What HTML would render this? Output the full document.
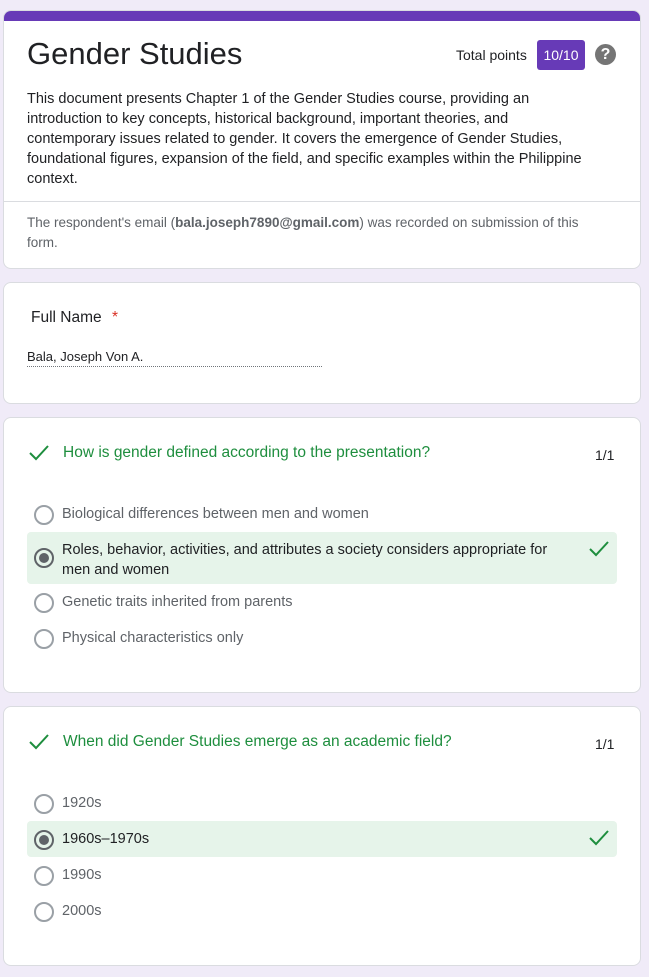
<!DOCTYPE html>
<html><head><meta charset="utf-8"><style>
body{margin:0;width:649px;height:977px;background:#f0ebf8;font-family:"Liberation Sans",sans-serif;position:relative;overflow:hidden;color:#202124}
.card{position:absolute;left:3px;width:638px;background:#fff;border:1px solid #dadce0;border-radius:8px;box-sizing:border-box}
.a{position:absolute;white-space:nowrap}
.r{position:absolute;width:16px;height:16px;border:2px solid #9aa0a6;border-radius:50%;left:34px}
.r.s{border-color:#5f6368}
.r.s:after{content:"";position:absolute;left:3px;top:3px;width:10px;height:10px;border-radius:50%;background:#5f6368}
.opt{font-size:14.5px;color:#5f6368;left:62px}
.hl{position:absolute;left:27px;width:590px;background:#e6f4ea;border-radius:4px}
.q{font-size:15.5px;color:#1e8e3e;left:63px}
</style></head><body>
<div class="card" style="top:10px;height:259px;overflow:hidden">
<div style="height:10px;background:#673ab7"></div>
<div style="position:absolute;left:0;right:0;top:190px;border-top:1px solid #dadce0"></div>
</div>
<div class="a" style="left:27px;top:36px;font-size:31px">Gender Studies</div>
<div class="a" style="left:456px;top:47px;font-size:14px">Total points</div>
<div class="a" style="left:537px;top:40px;width:48px;height:30px;background:#673ab7;color:#fff;border-radius:3px;font-size:14px;line-height:30px;text-align:center">10/10</div>
<div class="a" style="left:595px;top:44px;width:21px;height:21px;border-radius:50%;background:#757575;color:#fff;font-size:16px;font-weight:bold;text-align:center;line-height:21px">?</div>
<div class="a" style="left:27px;top:89px;font-size:14.5px;line-height:20px">This document presents Chapter 1 of the Gender Studies course, providing an<br>introduction to key concepts, historical background, important theories, and<br>contemporary issues related to gender. It covers the emergence of Gender Studies,<br>foundational figures, expansion of the field, and specific examples within the Philippine<br>context.</div>
<div class="a" style="left:27px;top:213px;font-size:13.5px;line-height:20px;color:#5f6368">The respondent's email (<b>bala.joseph7890@gmail.com</b>) was recorded on submission of this<br>form.</div>

<div class="card" style="top:282px;height:122px"></div>
<div class="a" style="left:31px;top:309px;font-size:15.5px">Full Name <span style="color:#d93025;margin-left:6px">*</span></div>
<div class="a" style="left:27px;top:349px;font-size:13px">Bala, Joseph Von A.</div>
<div class="a" style="left:27px;top:366px;width:295px;border-top:1px dotted #70757a"></div>

<div class="card" style="top:417px;height:276px"></div>
<svg class="a" style="left:28px;top:443px" width="22" height="20" viewBox="0 0 22 20"><path d="M2 10l6 6L20 3" stroke="#1e8e3e" stroke-width="2" fill="none"/></svg>
<div class="a q" style="top:444px">How is gender defined according to the presentation?</div>
<div class="a" style="left:595px;top:447px;font-size:14px">1/1</div>
<div class="r" style="top:505px"></div><div class="a opt" style="top:506px">Biological differences between men and women</div>
<div class="hl" style="top:532px;height:52px"></div>
<div class="r s" style="top:548px"></div>
<div class="a opt" style="top:540px;color:#202124;line-height:20px">Roles, behavior, activities, and attributes a society considers appropriate for<br>men and women</div>
<svg class="a" style="left:588px;top:539px" width="22" height="20" viewBox="0 0 22 20"><path d="M2 10l6 6L20 3" stroke="#1e8e3e" stroke-width="2" fill="none"/></svg>
<div class="r" style="top:593px"></div><div class="a opt" style="top:594px">Genetic traits inherited from parents</div>
<div class="r" style="top:629px"></div><div class="a opt" style="top:630px">Physical characteristics only</div>

<div class="card" style="top:706px;height:260px"></div>
<svg class="a" style="left:28px;top:732px" width="22" height="20" viewBox="0 0 22 20"><path d="M2 10l6 6L20 3" stroke="#1e8e3e" stroke-width="2" fill="none"/></svg>
<div class="a q" style="top:733px">When did Gender Studies emerge as an academic field?</div>
<div class="a" style="left:595px;top:736px;font-size:14px">1/1</div>
<div class="r" style="top:794px"></div><div class="a opt" style="top:795px">1920s</div>
<div class="hl" style="top:821px;height:36px"></div>
<div class="r s" style="top:830px"></div><div class="a opt" style="top:831px;color:#202124">1960s–1970s</div>
<svg class="a" style="left:588px;top:828px" width="22" height="20" viewBox="0 0 22 20"><path d="M2 10l6 6L20 3" stroke="#1e8e3e" stroke-width="2" fill="none"/></svg>
<div class="r" style="top:866px"></div><div class="a opt" style="top:867px">1990s</div>
<div class="r" style="top:902px"></div><div class="a opt" style="top:903px">2000s</div>
</body></html>
